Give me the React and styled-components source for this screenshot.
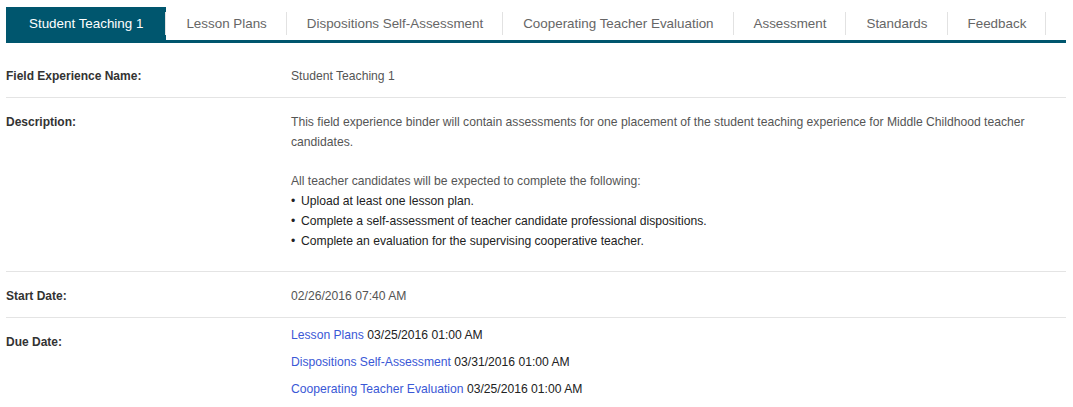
import React from "react";
import styled, { createGlobalStyle } from "styled-components";

const GlobalStyle = createGlobalStyle`
  html, body {
    margin: 0;
    padding: 0;
    background: #fff;
  }
  body {
    font-family: "Liberation Sans", Arial, sans-serif;
    -webkit-font-smoothing: antialiased;
  }
`;

const tabs = [
  "Student Teaching 1",
  "Lesson Plans",
  "Dispositions Self-Assessment",
  "Cooperating Teacher Evaluation",
  "Assessment",
  "Standards",
  "Feedback",
];

const dueDates = [
  { name: "Lesson Plans", date: "03/25/2016 01:00 AM" },
  { name: "Dispositions Self-Assessment", date: "03/31/2016 01:00 AM" },
  { name: "Cooperating Teacher Evaluation", date: "03/25/2016 01:00 AM" },
];

export default function App() {
  return (
    <>
      <GlobalStyle />
      <Page>
        {/* =================tabs */}
        <TabBar>
          {tabs.map((t, i) => (
            <Tab key={t} $active={i === 0}>
              {t}
            </Tab>
          ))}
        </TabBar>

        {/* =================details */}
        <Table>
          <Row>
            <Label>Field Experience Name:</Label>
            <Value>Student Teaching 1</Value>
          </Row>
          <Row>
            <Label>Description:</Label>
            <Value>
              <Para>
                This field experience binder will contain assessments for one
                placement of the student teaching experience for Middle
                Childhood teacher candidates.
              </Para>
              <Para>All teacher candidates will be expected to complete the following:</Para>
              <List>
                <li>Upload at least one lesson plan.</li>
                <li>Complete a self-assessment of teacher candidate professional dispositions.</li>
                <li>Complete an evaluation for the supervising cooperative teacher.</li>
              </List>
            </Value>
          </Row>
          <Row>
            <Label>Start Date:</Label>
            <Value>02/26/2016 07:40 AM</Value>
          </Row>
          <Row $last>
            <Label>Due Date:</Label>
            <DueList>
              {dueDates.map((d) => (
                <DueItem key={d.name}>
                  <Link href="#">{d.name}</Link> {d.date}
                </DueItem>
              ))}
            </DueList>
          </Row>
        </Table>
      </Page>
    </>
  );
}

const Page = styled.div`
  padding: 7px 7px 0 6px;
`;

const TabBar = styled.ul`
  list-style: none;
  margin: 0;
  padding: 0;
  display: flex;
  border-bottom: 3px solid #00566e;
`;

const Tab = styled.li`
  position: relative;
  flex-shrink: 0;
  white-space: nowrap;
  font-size: 13.4px;
  height: 33px;
  line-height: 33px;
  padding: 0 ${(p) => (p.$active ? "23px" : "20px")};
  color: ${(p) => (p.$active ? "#fff" : "#666")};
  background: ${(p) => (p.$active ? "#00566e" : "transparent")};
  cursor: pointer;

  &::after {
    content: "";
    position: absolute;
    right: 0;
    top: 5px;
    bottom: 5px;
    width: 1px;
    background: #e2e2e2;
  }
`;

const Table = styled.div`
  margin-top: 9px;
  font-size: 12px;
  line-height: 20px;
`;

const Row = styled.div`
  display: grid;
  grid-template-columns: 285px 1fr;
  padding: 14px 0 11px;
  border-bottom: ${(p) => (p.$last ? "none" : "1px solid #e4e4e4")};
`;

const Label = styled.div`
  font-weight: bold;
  color: #333;
`;

const Value = styled.div`
  font-size: 12.15px;
  color: #555;
  padding-right: 30px;
`;

const Para = styled.p`
  margin: 0 0 19px;
`;

const List = styled.ul`
  margin: -19px 0 9px;
  padding: 0 0 0 10px;
  list-style: none;
  color: #222;

  li::before {
    content: "•";
    display: inline-block;
    width: 10px;
    margin-left: -10px;
  }
`;

const DueList = styled.div`
  margin-top: -7px;
  font-size: 12.15px;
  color: #222;
`;

const DueItem = styled.div`
  line-height: 20px;
  margin-bottom: 7px;
`;

const Link = styled.a`
  color: #3a58d6;
  text-decoration: none;
`;
